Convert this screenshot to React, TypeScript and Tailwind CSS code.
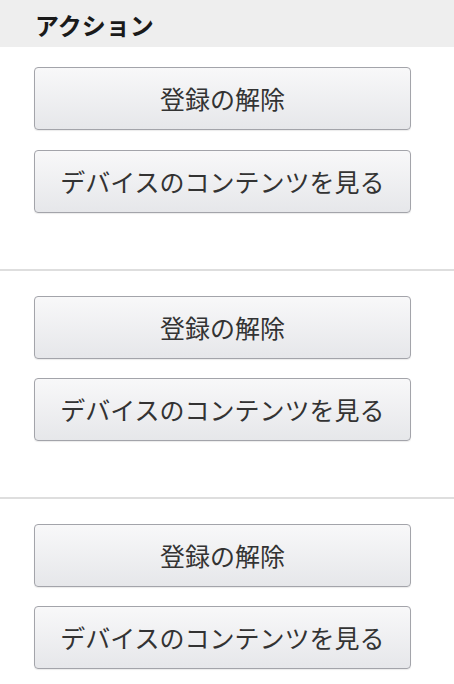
const font = { fontFamily: '"Noto Sans CJK JP", "Noto Sans", sans-serif' };

const groups = [1, 2, 3];

function ActionButton({ label }: { label: string }) {
  return (
    <button
      type="button"
      className="block w-[377px] h-[63px] rounded-[4px] border border-[#a3a4aa] bg-gradient-to-b from-[#f8f8f9] to-[#e6e7ea] text-[25px] text-[#333] shadow-[0_1px_1px_rgba(0,0,0,0.08)]"
    >
      {label}
    </button>
  );
}

export default function App() {
  return (
    <div className="w-[454px] bg-white" style={font}>
      <div className="h-[47px] bg-[#eeeeee] pl-[35px] pt-[3px] flex items-center">
        <h2 className="text-[24px] font-bold text-[#1a1a1a] leading-none">アクション</h2>
      </div>
      {groups.map((g, idx) => (
        <div
          key={g}
          className={
            idx === 0
              ? "pl-[34px] pt-[20px] pb-[56px] flex flex-col gap-[20px]"
              : "pl-[34px] pt-[25px] pb-[56px] flex flex-col gap-[19px] border-t-2 border-[#dedede]"
          }
        >
          <ActionButton label="登録の解除" />
          <ActionButton label="デバイスのコンテンツを見る" />
        </div>
      ))}
    </div>
  );
}
